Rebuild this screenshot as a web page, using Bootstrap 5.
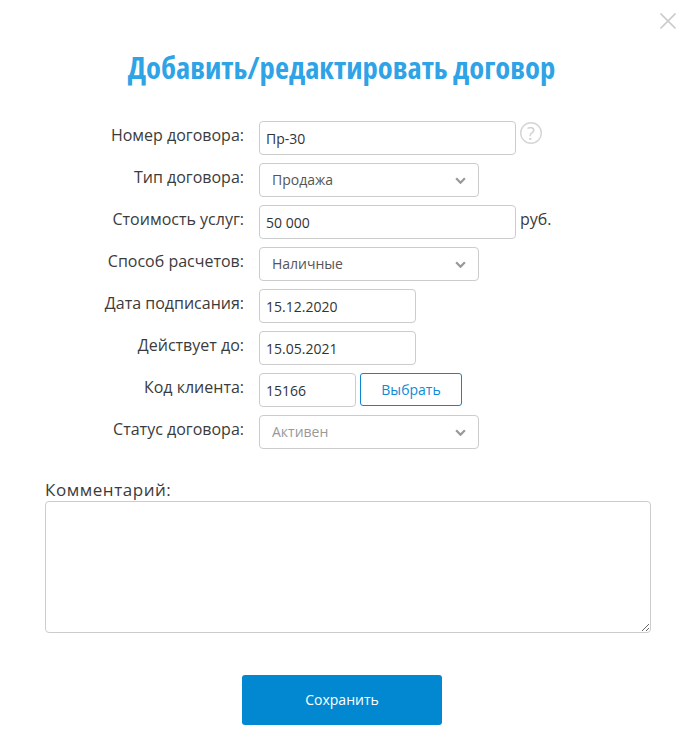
<!DOCTYPE html>
<html lang="ru">
<head>
    <meta charset="UTF-8">
    <meta name="viewport" content="width=device-width, initial-scale=1.0">
    <title>Добавить/редактировать договор</title>
    <link href="https://cdn.jsdelivr.net/npm/bootstrap@5.3.0/dist/css/bootstrap.min.css" rel="stylesheet">
    <style>
        body { font-family: "Open Sans", "Liberation Sans", sans-serif; color: #333; background: #fff; }
        .dlg { position: relative; width: 685px; height: 739px; padding: 45px 34px 0 45px; overflow: hidden; }
        .dlg-close { position: absolute; left: 660px; top: 13px; width: 16px; height: 16px; display: block; }
        .dlg-title { font-family: "Open Sans", sans-serif; font-size: 30.6px; line-height: 44px; font-weight: 700; font-stretch: 75%; color: #2ea3e6; margin: 0 0 32px; text-align: center; width: 593px; }
        .frow { display: flex; align-items: flex-start; height: 34px; margin-bottom: 8px; }
        .flabel { width: 199px; flex: none; margin: 0 15px 0 0; text-align: right; font-size: 16px; line-height: 28px; color: #3b3b3b; }
        .dlg .form-control, .dlg .form-select { height: 34px; min-height: 0; font-size: 14px; line-height: 20px; color: #333; border: 1px solid #ccc; border-radius: 4px; box-shadow: none; }
        .dlg .form-control { padding: 6px; }
        .dlg .form-select { padding: 6px 30px 6px 12px; color: #555; background-image: url("data:image/svg+xml,%3csvg xmlns='http://www.w3.org/2000/svg' viewBox='0 0 12 8'%3e%3cpath fill='none' stroke='%23999' stroke-width='2.600' d='M1 1.500l5 5 5-5'/%3e%3c/svg%3e"); background-position: right 12px center; background-size: 11px 7px; }
        .dlg .form-select.is-off { color: #999; }
        .w-long { width: 257px; }
        .w-sel { width: 220px; }
        .w-date { width: 157px; }
        .w-code { width: 97px; }
        .hint { width: 22px; height: 22px; margin: 1px 0 0 4px; flex: none; }
        .unit { margin-left: 4px; font-size: 16px; line-height: 28px; color: #3b3b3b; }
        .btn-pick { width: 102px; height: 33px; margin-left: 4px; padding: 0; font-size: 14px; line-height: 31px; color: #0d8ad6; background: #fff; border: 1px solid #0d87cf; border-radius: 3px; }
        .fcomment { display: block; margin: 30px 0 0; font-size: 17px; letter-spacing: .55px; line-height: 22px; color: #3b3b3b; }
        .dlg textarea.form-control { display: block; width: 606px; height: 132px; padding: 6px; resize: both; }
        .btn-save { display: block; width: 200px; height: 50px; margin: 42px 0 0 197px; padding: 0 0 1px; font-size: 14px; font-weight: 400; color: #fff; background: #0288d1; border: 0; border-radius: 3px; }
    </style>
</head>
<body>
    <div class="dlg">
        <svg class="dlg-close" viewBox="0 0 16 16"><path d="M.5.5l15 15M15.500.5l-15 15" fill="none" stroke="#ccc" stroke-width="1.6"/></svg>
        <h1 class="dlg-title">Добавить/редактировать договор</h1>
        <form>
            <div class="frow">
                <label class="flabel">Номер договора:</label>
                <input class="form-control w-long" type="text" value="Пр-30">
                <svg class="hint" viewBox="0 0 22 22"><circle cx="11" cy="11" r="10.300" fill="none" stroke="#d5d5d5" stroke-width="1.400"/><text x="11" y="17.500" text-anchor="middle" font-size="18" fill="#d0d0d0" font-family="Open Sans">?</text></svg>
            </div>
            <div class="frow">
                <label class="flabel">Тип договора:</label>
                <select class="form-select w-sel"><option>Продажа</option></select>
            </div>
            <div class="frow">
                <label class="flabel">Стоимость услуг:</label>
                <input class="form-control w-long" type="text" value="50 000">
                <span class="unit">руб.</span>
            </div>
            <div class="frow">
                <label class="flabel">Способ расчетов:</label>
                <select class="form-select w-sel"><option>Наличные</option></select>
            </div>
            <div class="frow">
                <label class="flabel">Дата подписания:</label>
                <input class="form-control w-date" type="text" value="15.12.2020">
            </div>
            <div class="frow">
                <label class="flabel">Действует до:</label>
                <input class="form-control w-date" type="text" value="15.05.2021">
            </div>
            <div class="frow">
                <label class="flabel">Код клиента:</label>
                <input class="form-control w-code" type="text" value="15166">
                <button type="button" class="btn btn-pick">Выбрать</button>
            </div>
            <div class="frow">
                <label class="flabel">Статус договора:</label>
                <select class="form-select w-sel is-off"><option>Активен</option></select>
            </div>
            <label class="fcomment">Комментарий:</label>
            <textarea class="form-control"></textarea>
            <button type="button" class="btn btn-save">Сохранить</button>
        </form>
    </div>
    <script src="https://cdn.jsdelivr.net/npm/bootstrap@5.3.0/dist/js/bootstrap.bundle.min.js"></script>
</body>
</html>
